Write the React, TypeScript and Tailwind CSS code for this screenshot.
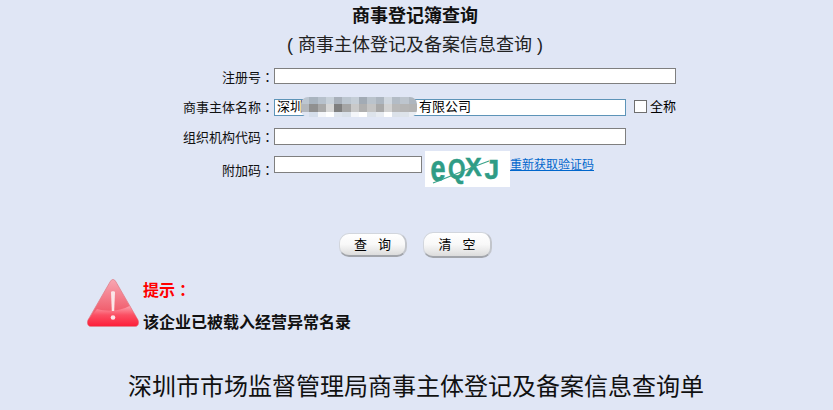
import React from 'react';

const FONT = "font-['Liberation_Sans','Noto_Sans_CJK_SC',sans-serif]";

// pixelated part of the company name
const mosaic = [
  ['#bcc6d1', '#a9b4bf', '#b7c1cc', '#c8d1da', '#a8b0ba', '#bcc6d0', '#c5ced7', '#a2abb5', '#bac3cc', '#adb6c0', '#d0d7df', '#b3bcc6', '#bdc5ce', '#aeb6bf'],
  ['#b3b7bc', '#909090', '#a9a9a9', '#d6d6d6', '#7f7f7f', '#a5a5a5', '#c9c9c9', '#b0b0b0', '#c4c4c4', '#a9a9a9', '#d2d2d2', '#b8b8b8', '#b5b5b5', '#b3b3b3'],
  ['#dfe5f2', '#d5deeb', '#f4f6fa', '#ffffff', '#dfe5ee', '#d9e0e9', '#f4f6fa', '#ffffff', '#dde3eb', '#e7ebf1', '#ffffff', '#dbe1e9', '#dde3ea', '#e8ecf2'],
];

const Colon = () => <span className="font-['Noto_Sans_CJK_TC',sans-serif]">：</span>;

const Label: React.FC<{ children: React.ReactNode; className?: string }> = ({ children, className }) => (
  <span className={`block w-[274px] text-right text-[13px] leading-[16px] text-[#111] ${className ?? ''}`}>
    {children}
    <Colon />
  </span>
);

const Field: React.FC<{ className?: string }> = ({ className }) => (
  <div className={`border border-[#7f7f7f] bg-white ${className ?? ''}`} />
);

const PillButton: React.FC<{ label: string; className?: string }> = ({ label, className }) => (
  <button
    type="button"
    className={`flex items-center justify-center rounded-[10px] border border-[#d2d6dd] border-b-[2px] border-b-[#a2a5ab] border-r-[2px] border-r-[#c2c5cb] bg-gradient-to-b from-white via-[#f8f8f8] to-[#dcdcdc] text-[13px] leading-none text-black whitespace-pre ${className ?? ''}`}
  >
    {label}
  </button>
);

const WarningIcon = () => (
  <svg width="52" height="48" viewBox="0 0 52 48" className="shrink-0">
    <defs>
      <linearGradient id="warnTop" x1="0" y1="0" x2="0" y2="1">
        <stop offset="0" stopColor="#f8a6b2" />
        <stop offset="0.65" stopColor="#f1606f" />
        <stop offset="1" stopColor="#ee4a5c" />
      </linearGradient>
      <linearGradient id="warnBottom" x1="0" y1="0" x2="0" y2="1">
        <stop offset="0" stopColor="#fca3ae" />
        <stop offset="0.45" stopColor="#fb4f63" />
        <stop offset="1" stopColor="#fd1f3a" />
      </linearGradient>
    </defs>
    <path d="M26 0.5 C24.8 0.5 24 1.3 23 3 L1 41 C-0.5 44.5 1 47.5 4 47.5 L48 47.5 C51 47.5 52.5 44.5 51 41 L29 3 C28 1.3 27.2 0.5 26 0.5 Z" fill="url(#warnTop)" stroke="#e0808c" strokeWidth="0.8" />
    <path d="M10 30 C20 33 34 32 42.5 27 L50.8 41 C52 44.5 50.8 47 48 47 L4 47 C1.2 47 0 44.5 1.2 41 Z" fill="url(#warnBottom)" />
    <path d="M24 13 C24 12 28 12 28 13 L27.2 32 L24.8 32 Z" fill="#fbe6e8" />
    <circle cx="26" cy="38.5" r="2.3" fill="#fbe6e8" />
  </svg>
);

const Captcha = () => (
  <svg width="85" height="36" viewBox="0 0 85 36" className="shrink-0 overflow-visible bg-white">
    <g fontFamily="Liberation Sans" fontWeight="700" fill="#2f9c86" stroke="#2f9c86" strokeWidth="0.5">
      <text transform="translate(5.5 30) scale(1 1.35)" fontSize="27">e</text>
      <text transform="translate(23 27) scale(0.9 1.1)" fontSize="25">Q</text>
      <text x="40" y="25" fontSize="25">X</text>
      <text transform="translate(59.5 28) scale(1.05 1.1)" fontSize="25">J</text>
    </g>
    <path d="M8 32 C24 26 42 18 64 10" stroke="#3aa38a" strokeWidth="1.3" fill="none" />
  </svg>
);

export default function App() {
  return (
    <div className={`h-[410px] w-[833px] overflow-hidden bg-[#e0e6f5] ${FONT}`}>
      <h1 className="pr-[3px] pt-[5px] text-center text-[18px] font-bold leading-[22px] text-[#111]">商事登记簿查询</h1>
      <p className="mt-[7px] pr-[3px] text-center text-[18px] leading-[22px] text-[#222]">( 商事主体登记及备案信息查询 )</p>

      <div className="mt-[12px] flex flex-col">
        <div className="flex h-[17px] items-start">
          <Label className="mt-[1px]">注册号</Label>
          <Field className="h-[16px] w-[402px]" />
        </div>

        <div className="mt-[14px] flex h-[18px] items-start">
          <Label>商事主体名称</Label>
          <div className="relative flex h-[17px] w-[352px] items-center border border-[#5d94b8] bg-white pb-[3px] pl-[2px] text-[13px] leading-none text-black">
            <span>深圳</span>
            <span className="ml-[116px]">有限公司</span>
            <div className="absolute left-[26px] top-[-3px] grid w-[116px] grid-cols-[repeat(14,1fr)] grid-rows-[7px_8px_5px] overflow-hidden rounded-[7px]">
              {mosaic.flat().map((color, i) => (
                <div key={i} style={{ backgroundColor: color }} />
              ))}
            </div>
          </div>
          <div className="ml-[8px] mt-[1px] h-[13px] w-[13px] border border-[#6f6f6f] bg-white" />
          <span className="ml-[3px] mt-[1px] text-[13px] leading-[14px] text-black">全称</span>
        </div>

        <div className="mt-[11px] flex h-[18px] items-start">
          <Label className="mt-[1px]">组织机构代码</Label>
          <Field className="h-[17px] w-[352px]" />
        </div>

        <div className="mt-[5px] flex h-[37px] items-start">
          <Label className="mt-[11px]">附加码</Label>
          <Field className="mt-[5px] h-[17px] w-[148px]" />
          <div className="ml-[3px]"><Captcha /></div>
          <a className="mt-[7px] text-[12px] leading-[15px] text-[#0066cc] underline">重新获取验证码</a>
        </div>
      </div>

      <div className="mt-[43px] flex h-[27px] items-center">
        <PillButton label="查   询" className="ml-[339px] h-[24px] w-[68px]" />
        <PillButton label="清   空" className="ml-[16px] h-[26px] w-[69px]" />
      </div>

      <div className="ml-[87px] mt-[21px] flex items-start">
        <WarningIcon />
        <div className="ml-[4px] flex flex-col">
          <span className="text-[16px] font-bold leading-[20px] text-[#ff0000]">提示<Colon /></span>
          <span className="mt-[12px] text-[16px] font-bold leading-[20px] text-[#111]">该企业已被载入经营异常名录</span>
        </div>
      </div>

      <p className="mt-[39px] pr-[1px] text-center text-[24px] leading-[30px] text-[#111]">深圳市市场监督管理局商事主体登记及备案信息查询单</p>
    </div>
  );
}
